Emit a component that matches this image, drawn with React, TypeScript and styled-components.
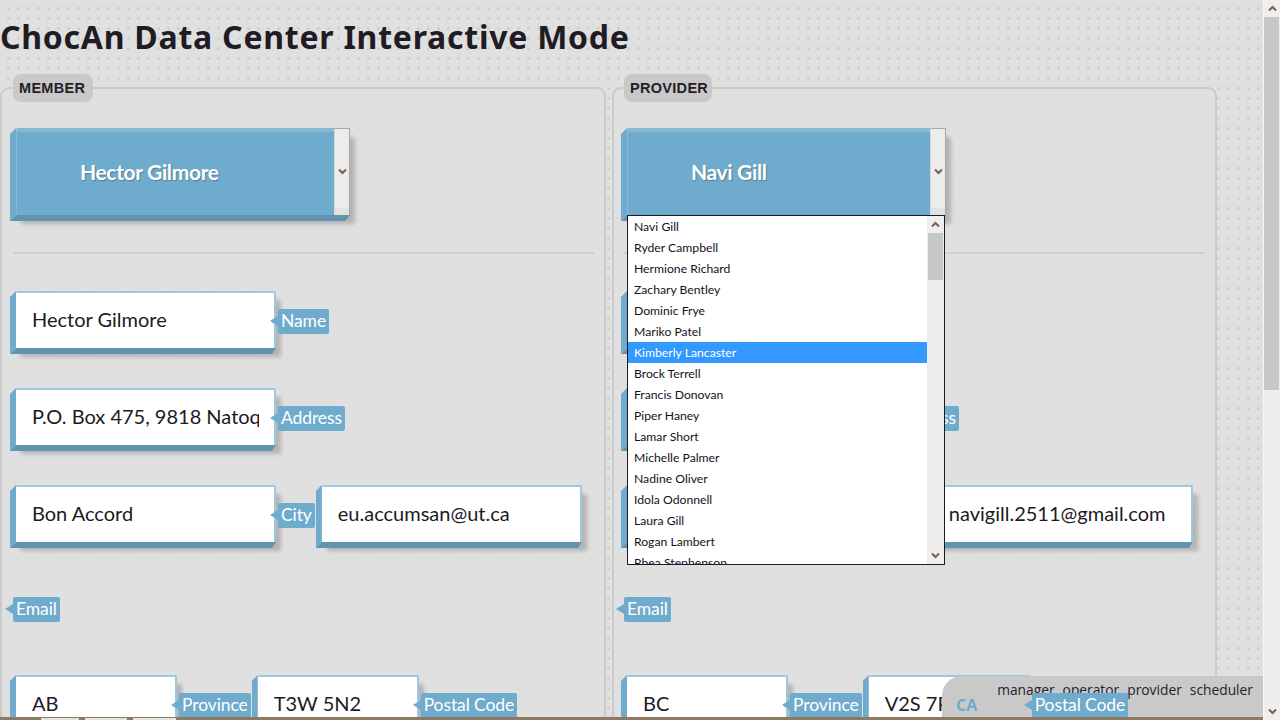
import React from "react";
import styled, { createGlobalStyle } from "styled-components";

const Global = createGlobalStyle`
  html, body { margin: 0; padding: 0; height: 100%; overflow: hidden; }
  body { font-family: "Lato", "Liberation Sans", sans-serif; color: #1d1a24; background: #e0e0e0; }
  * { box-sizing: border-box; }
`;

const blue = "#6fabcc";
const blueDark = "#6293b0";
const blueLight = "#9cc8e0";

const Shell = styled.div`
  display: flex;
  width: 1280px;
  height: 720px;
  overflow: hidden;
`;

const Page = styled.main`
  position: relative;
  flex: 0 0 1263px;
  height: 720px;
  overflow: hidden;
  background-color: #e0e0e0;
  background-image:
    radial-gradient(circle at 8.5px 8.5px, #d0d0d0 0, #d0d0d0 1.3px, transparent 1.8px);
  background-size: 10px 10px;
`;

const Title = styled.h1`
  margin: 0;
  height: 74px;
  padding-top: 14px;
  font-family: "Noto Sans", sans-serif;
  font-size: 32px;
  line-height: 45px;
  font-weight: 700;
  letter-spacing: 0.75px;
  color: #211b23;
  white-space: nowrap;
`;

const Columns = styled.div`
  display: flex;
  gap: 6px;
`;

const Panel = styled.fieldset<{ $w: number; $pad: number }>`
  flex: 0 0 ${(p) => p.$w}px;
  width: ${(p) => p.$w}px;
  height: 700px;
  margin: 0;
  padding: 26px 0 0 ${(p) => p.$pad}px;
  min-width: 0;
  border: 2px solid #cbcbcb;
  border-radius: 9px;
  background: rgba(224, 224, 224, 0.8);
`;

const PanelLegend = styled.legend<{ $w: number }>`
  width: ${(p) => p.$w}px;
  margin-left: 3px;
  padding: 0 0 0 6px;
  height: 28px;
  background: #c9c9c9;
  border-radius: 8px;
  font-family: "Liberation Sans", sans-serif;
  font-size: 14.5px;
  line-height: 28px;
  font-weight: 700;
  letter-spacing: 0.3px;
  color: #25202a;
`;

const SelectWrap = styled.div<{ $w: number }>`
  position: relative;
  width: ${(p) => p.$w}px;
  height: 93px;
`;

const SelectBox = styled.div`
  position: relative;
  margin-left: 6px;
  height: 87px;
  display: flex;
  align-items: center;
  background: ${blue};
  border-top: 4px solid #86b9d4;
  border-left: 1px solid #85b8d3;
  border-radius: 2px 2px 0 0;
  box-shadow: 5px 9px 4px rgba(0, 0, 0, 0.2);

  &::before {
    content: "";
    position: absolute;
    left: -7px;
    top: -4px;
    bottom: -6px;
    width: 6px;
    background: ${blue};
    clip-path: polygon(100% 0, 100% calc(100% - 6px), 0 100%, 0 6px);
  }

  &::after {
    content: "";
    position: absolute;
    left: -7px;
    right: 0;
    bottom: -6px;
    height: 6px;
    background: ${blueDark};
    clip-path: polygon(6px 0, 100% 0, calc(100% - 5px) 100%, 0 100%);
  }
`;

const SelectText = styled.div`
  flex: 1;
  padding-left: 63px;
  margin-top: -5px;
  font-size: 21px;
  font-weight: 700;
  letter-spacing: -0.35px;
  color: #fff;
  text-shadow: 1px 1px 1px rgba(60, 90, 110, 0.55);
`;

const SelectArrow = styled.div`
  position: relative;
  z-index: 1;
  flex: 0 0 16px;
  width: 16px;
  height: 87px;
  margin-top: -4px;
  padding-bottom: 2px;
  display: flex;
  align-items: center;
  justify-content: center;
  background: linear-gradient(#ececec 0, #ececec 92%, #e2e2e2 92%);
  border-top: 1px solid #a8a8a8;
  border-right: 1px solid #a8a8a8;
  border-left: 1px solid #d8d8d8;
`;

const Chevron = ({ up }: { up?: boolean }) => (
  <svg width="9" height="7" viewBox="0 0 9 7" style={{ transform: up ? "rotate(180deg)" : undefined }}>
    <path d="M1 1.5 L4.5 5 L8 1.5" fill="none" stroke="#7d5f48" strokeWidth="2" />
  </svg>
);

const Dropdown = styled.div`
  position: absolute;
  z-index: 3;
  left: 6px;
  top: 87px;
  width: 318px;
  height: 350px;
  display: flex;
  background: #fff;
  border: 1px solid #1b1a26;
  overflow: hidden;
`;

const OptionList = styled.ul`
  flex: 1;
  margin: 0;
  padding: 0;
  list-style: none;
  overflow: hidden;
`;

const Option = styled.li<{ $active?: boolean }>`
  height: 21px;
  padding-left: 6px;
  font-size: 12.2px;
  line-height: 22px;
  white-space: nowrap;
  color: ${(p) => (p.$active ? "#fff" : "#14121c")};
  background: ${(p) => (p.$active ? "#3399ff" : "#fff")};
`;

const ListBar = styled.div`
  flex: 0 0 17px;
  display: flex;
  flex-direction: column;
  align-items: center;
  background: #eeeeee;
`;

const BarButton = styled.div`
  flex: 0 0 17px;
  width: 100%;
  display: flex;
  align-items: center;
  justify-content: center;
`;

const ListThumb = styled.div`
  flex: 0 0 47px;
  width: 15px;
  margin-right: 1px;
  background: #c8c8c8;
`;

const ListGap = styled.div`
  flex: 1;
`;

const Divider = styled.hr`
  width: 581px;
  height: 2px;
  margin: 31px 0 37px 3px;
  border: 0;
  background: #d0d0d0;
`;

const Row = styled.div`
  display: flex;
  align-items: flex-start;
  gap: 2px;
  height: 63px;
  margin-bottom: 34px;
`;

const LabelRow = styled.div`
  display: flex;
  align-items: flex-start;
  height: 93px;
  padding: 15px 0 0 3px;
`;

const Field = styled.div<{ $w: number }>`
  position: relative;
  flex: 0 0 ${(p) => p.$w}px;
  width: ${(p) => p.$w}px;
  height: 63px;
  padding: 0 0 6px 6px;
`;

const FieldBox = styled.div`
  position: relative;
  height: 100%;
  display: flex;
  align-items: center;
  padding: 0 15px 0 14px;
  background: #fff;
  border: 2px solid ${blueLight};
  border-left: 0;
  border-bottom: 0;
  border-radius: 2px 2px 0 0;
  box-shadow: 5px 9px 4px rgba(0, 0, 0, 0.2);
`;

const FieldEdge = styled.div`
  position: absolute;
  inset: 0;
  pointer-events: none;

  &::before {
    content: "";
    position: absolute;
    left: 0;
    top: 0;
    bottom: 0;
    width: 6px;
    background: ${blue};
    clip-path: polygon(100% 0, 100% calc(100% - 6px), 0 100%, 0 6px);
  }

  &::after {
    content: "";
    position: absolute;
    left: 0;
    right: 0;
    bottom: 0;
    height: 6px;
    background: ${blueDark};
    clip-path: polygon(6px 0, 100% 0, calc(100% - 4px) 100%, 0 100%);
  }
`;

const FieldText = styled.div`
  flex: 1;
  margin: -4px 0 0 2px;
  overflow: hidden;
  white-space: nowrap;
  font-size: 20px;
  line-height: 28px;
  color: #1d1a24;
`;

const Tag = styled.span<{ $top?: number; $shift?: number }>`
  position: relative;
  z-index: 2;
  display: inline-block;
  flex: 0 0 auto;
  height: 25px;
  margin-top: ${(p) => p.$top ?? 18}px;
  margin-left: ${(p) => p.$shift ?? 0}px;
  margin-right: -1px;
  padding: 0 3px;
  border-radius: 2px;
  background: ${blue};
  color: #fff;
  font-size: 17.5px;
  letter-spacing: -0.1px;
  line-height: 24px;
  white-space: nowrap;

  &::before {
    content: "";
    position: absolute;
    left: -8px;
    top: 7px;
    border-style: solid;
    border-width: 5px 8px 5px 0;
    border-color: transparent ${blue} transparent transparent;
  }
`;

const Footer = styled.footer`
  position: absolute;
  z-index: 1;
  right: 0;
  bottom: 3px;
  width: 321px;
  height: 41px;
  padding: 6px 10px 0 14px;
  border-top-left-radius: 20px;
  background: #c9c9c9;
`;

const FooterLinks = styled.nav`
  display: flex;
  justify-content: flex-end;
  gap: 8px;
  font-family: "Open Sans", sans-serif;
  font-size: 13.8px;
  line-height: 16px;
  color: #26222c;
`;

const Country = styled.div`
  margin-top: -2px;
  font-family: "Open Sans", sans-serif;
  font-size: 16px;
  line-height: 18px;
  font-weight: 700;
  color: ${blue};
`;

const BottomBar = styled.div`
  position: absolute;
  z-index: 2;
  left: 0;
  right: 0;
  bottom: 0;
  height: 3px;
  display: flex;
  align-items: flex-end;
  gap: 6px;
  padding-left: 41px;
  background: #8d7a63;
`;

const BarSegment = styled.span<{ $w: number }>`
  flex: 0 0 ${(p) => p.$w}px;
  height: 2px;
  background: #e6e3de;
`;

const PageBar = styled.aside`
  flex: 0 0 17px;
  display: flex;
  flex-direction: column;
  background: #eeeeee;
  border-left: 1px solid #f7f7f7;
`;

const PageThumb = styled.div`
  flex: 0 0 373px;
  width: 15px;
  background: #c8c8c8;
`;

const members = [
  "Navi Gill", "Ryder Campbell", "Hermione Richard", "Zachary Bentley", "Dominic Frye",
  "Mariko Patel", "Kimberly Lancaster", "Brock Terrell", "Francis Donovan", "Piper Haney",
  "Lamar Short", "Michelle Palmer", "Nadine Oliver", "Idola Odonnell", "Laura Gill",
  "Rogan Lambert", "Rhea Stephenson",
];

type FieldProps = { w: number; text: string };
const Input = ({ w, text }: FieldProps) => (
  <Field $w={w}>
    <FieldBox>
      <FieldText>{text}</FieldText>
    </FieldBox>
    <FieldEdge />
  </Field>
);

const SelectControl = ({ w, name, open }: { w: number; name: string; open?: boolean }) => (
  <SelectWrap $w={w}>
    <SelectBox>
      <SelectText>{name}</SelectText>
      <SelectArrow>
        <Chevron />
      </SelectArrow>
    </SelectBox>
    {open && (
      <Dropdown>
        <OptionList>
          {members.map((m) => (
            <Option key={m} $active={m === "Kimberly Lancaster"}>
              {m}
            </Option>
          ))}
        </OptionList>
        <ListBar>
          <BarButton>
            <Chevron up />
          </BarButton>
          <ListThumb />
          <ListGap />
          <BarButton>
            <Chevron />
          </BarButton>
        </ListBar>
      </Dropdown>
    )}
  </SelectWrap>
);

type Person = {
  legend: string;
  legendW: number;
  w: number;
  pad: number;
  selectW: number;
  open?: boolean;
  name: string;
  address: string;
  city: string;
  email: string;
  province: string;
  postal: string;
  addressShift?: number;
};

const Section = ({ p }: { p: Person }) => (
  <Panel $w={p.w} $pad={p.pad}>
    <PanelLegend $w={p.legendW}>{p.legend}</PanelLegend>
    <SelectControl w={p.selectW} name={p.name} open={p.open} />
    <Divider />
    <Row>
      <Input w={266} text={p.name} />
      <Tag>Name</Tag>
    </Row>
    <Row>
      <Input w={266} text={p.address} />
      <Tag $shift={p.addressShift}>Address</Tag>
    </Row>
    <Row>
      <Input w={266} text={p.city} />
      <Tag>City</Tag>
      <Input w={266} text={p.email} />
    </Row>
    <LabelRow>
      <Tag $top={0}>Email</Tag>
    </LabelRow>
    <Row>
      <Input w={167} text={p.province} />
      <Tag>Province</Tag>
      <Input w={167} text={p.postal} />
      <Tag>Postal Code</Tag>
    </Row>
  </Panel>
);

export default function App() {
  return (
    <Shell>
      <Global />
      <Page>
        <Title>ChocAn Data Center Interactive Mode</Title>
        <Columns>
          <Section
            p={{
              legend: "MEMBER",
              legendW: 80,
              w: 606,
              pad: 8,
              selectW: 340,
              name: "Hector Gilmore",
              address: "P.O. Box 475, 9818 Natoque Rd.",
              city: "Bon Accord",
              email: "eu.accumsan@ut.ca",
              province: "AB",
              postal: "T3W 5N2",
            }}
          />
          <Section
            p={{
              legend: "PROVIDER",
              legendW: 88,
              w: 605,
              pad: 7,
              selectW: 325,
              open: true,
              name: "Navi Gill",
              address: "1427 Sed Street",
              city: "Vancouver",
              email: "navigill.2511@gmail.com",
              province: "BC",
              postal: "V2S 7P9",
              addressShift: 3,
            }}
          />
        </Columns>
        <Footer>
          <FooterLinks>
            <span>manager</span>
            <span>operator</span>
            <span>provider</span>
            <span>scheduler</span>
          </FooterLinks>
          <Country>CA</Country>
        </Footer>
        <BottomBar>
          <BarSegment $w={38} />
          <BarSegment $w={42} />
          <BarSegment $w={43} />
        </BottomBar>
      </Page>
      <PageBar>
        <BarButton>
          <Chevron up />
        </BarButton>
        <PageThumb />
        <ListGap />
        <BarButton>
          <Chevron />
        </BarButton>
      </PageBar>
    </Shell>
  );
}
